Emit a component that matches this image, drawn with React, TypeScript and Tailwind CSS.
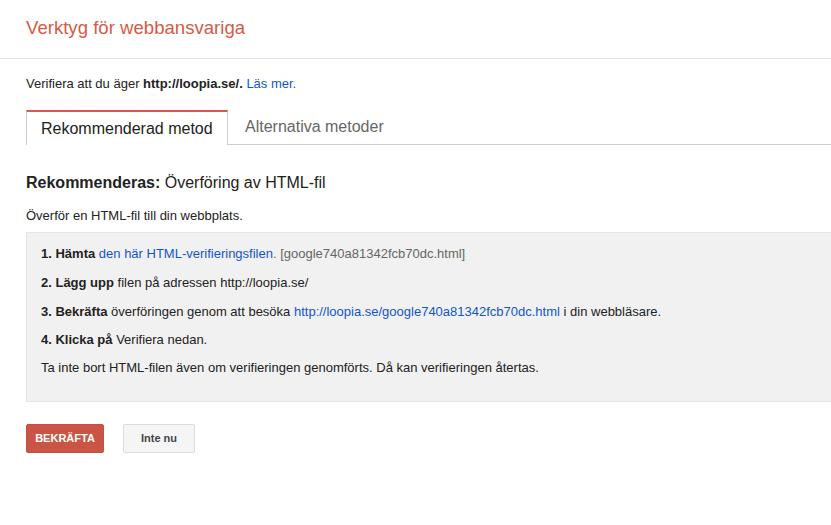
export default function App() {
  return (
    <div className="min-h-[525px] w-[831px] overflow-hidden bg-white text-[13px] text-[#222] [font-family:'Liberation_Sans',Arial,sans-serif]">
      <header className="h-[59px] border-b border-[#e5e5e5] pl-[26px] pt-[16px]">
        <h1 className="text-[18.6px] leading-[24px] text-[#d55a48]">Verktyg för webbansvariga</h1>
      </header>

      <div className="pl-[26px]">
        <p className="mt-[17px] leading-[16px]">
          Verifiera att du äger <b>http://loopia.se/.</b>{" "}
          <a className="text-[#15c]">Läs mer.</a>
        </p>

        <div className="mt-[18px] flex h-[35px] items-stretch">
          <div className="flex w-[202px] items-center border-x border-t-2 border-[#ccc] border-t-[#d55a48] bg-white pl-[14px] text-[16px] text-[#222]">
            Rekommenderad metod
          </div>
          <div className="flex flex-1 items-center border-b border-[#ccc] pl-[17px] text-[16px] text-[#666]">
            Alternativa metoder
          </div>
        </div>

        <h2 className="mt-[28px] text-[16px] leading-[20px]">
          <b>Rekommenderas:</b> Överföring av HTML-fil
        </h2>

        <p className="mt-[15px] leading-[16px]">Överför en HTML-fil till din webbplats.</p>

        <div className="mt-[8px] h-[170px] border-y border-l border-[#e5e5e5] bg-[#f1f1f1] pl-[14px] pt-[13px] leading-[16px]">
          <p>
            <b>1. Hämta</b> <a className="text-[#15c]">den här HTML-verifieringsfilen</a>
            <span className="text-[#666]">. [google740a81342fcb70dc.html]</span>
          </p>
          <p className="mt-[13px]">
            <b>2. Lägg upp</b> filen på adressen http://loopia.se/
          </p>
          <p className="mt-[13px]">
            <b>3. Bekräfta</b> överföringen genom att besöka{" "}
            <a className="text-[#15c]">http://loopia.se/google740a81342fcb70dc.html</a> i din webbläsare.
          </p>
          <p className="mt-[12px]">
            <b>4. Klicka på</b> Verifiera nedan.
          </p>
          <p className="mt-[12px]">
            Ta inte bort HTML-filen även om verifieringen genomförts. Då kan verifieringen återtas.
          </p>
        </div>

        <div className="mt-[22px] flex gap-[19px]">
          <button className="h-[29px] w-[78px] rounded-[2px] border border-[#c4503f] bg-[#cb5544] text-[11px] font-bold text-white">
            BEKRÄFTA
          </button>
          <button className="h-[29px] w-[72px] rounded-[2px] border border-[#dcdcdc] bg-[#f5f5f5] text-[11px] font-bold text-[#444]">
            Inte nu
          </button>
        </div>
      </div>
    </div>
  );
}
